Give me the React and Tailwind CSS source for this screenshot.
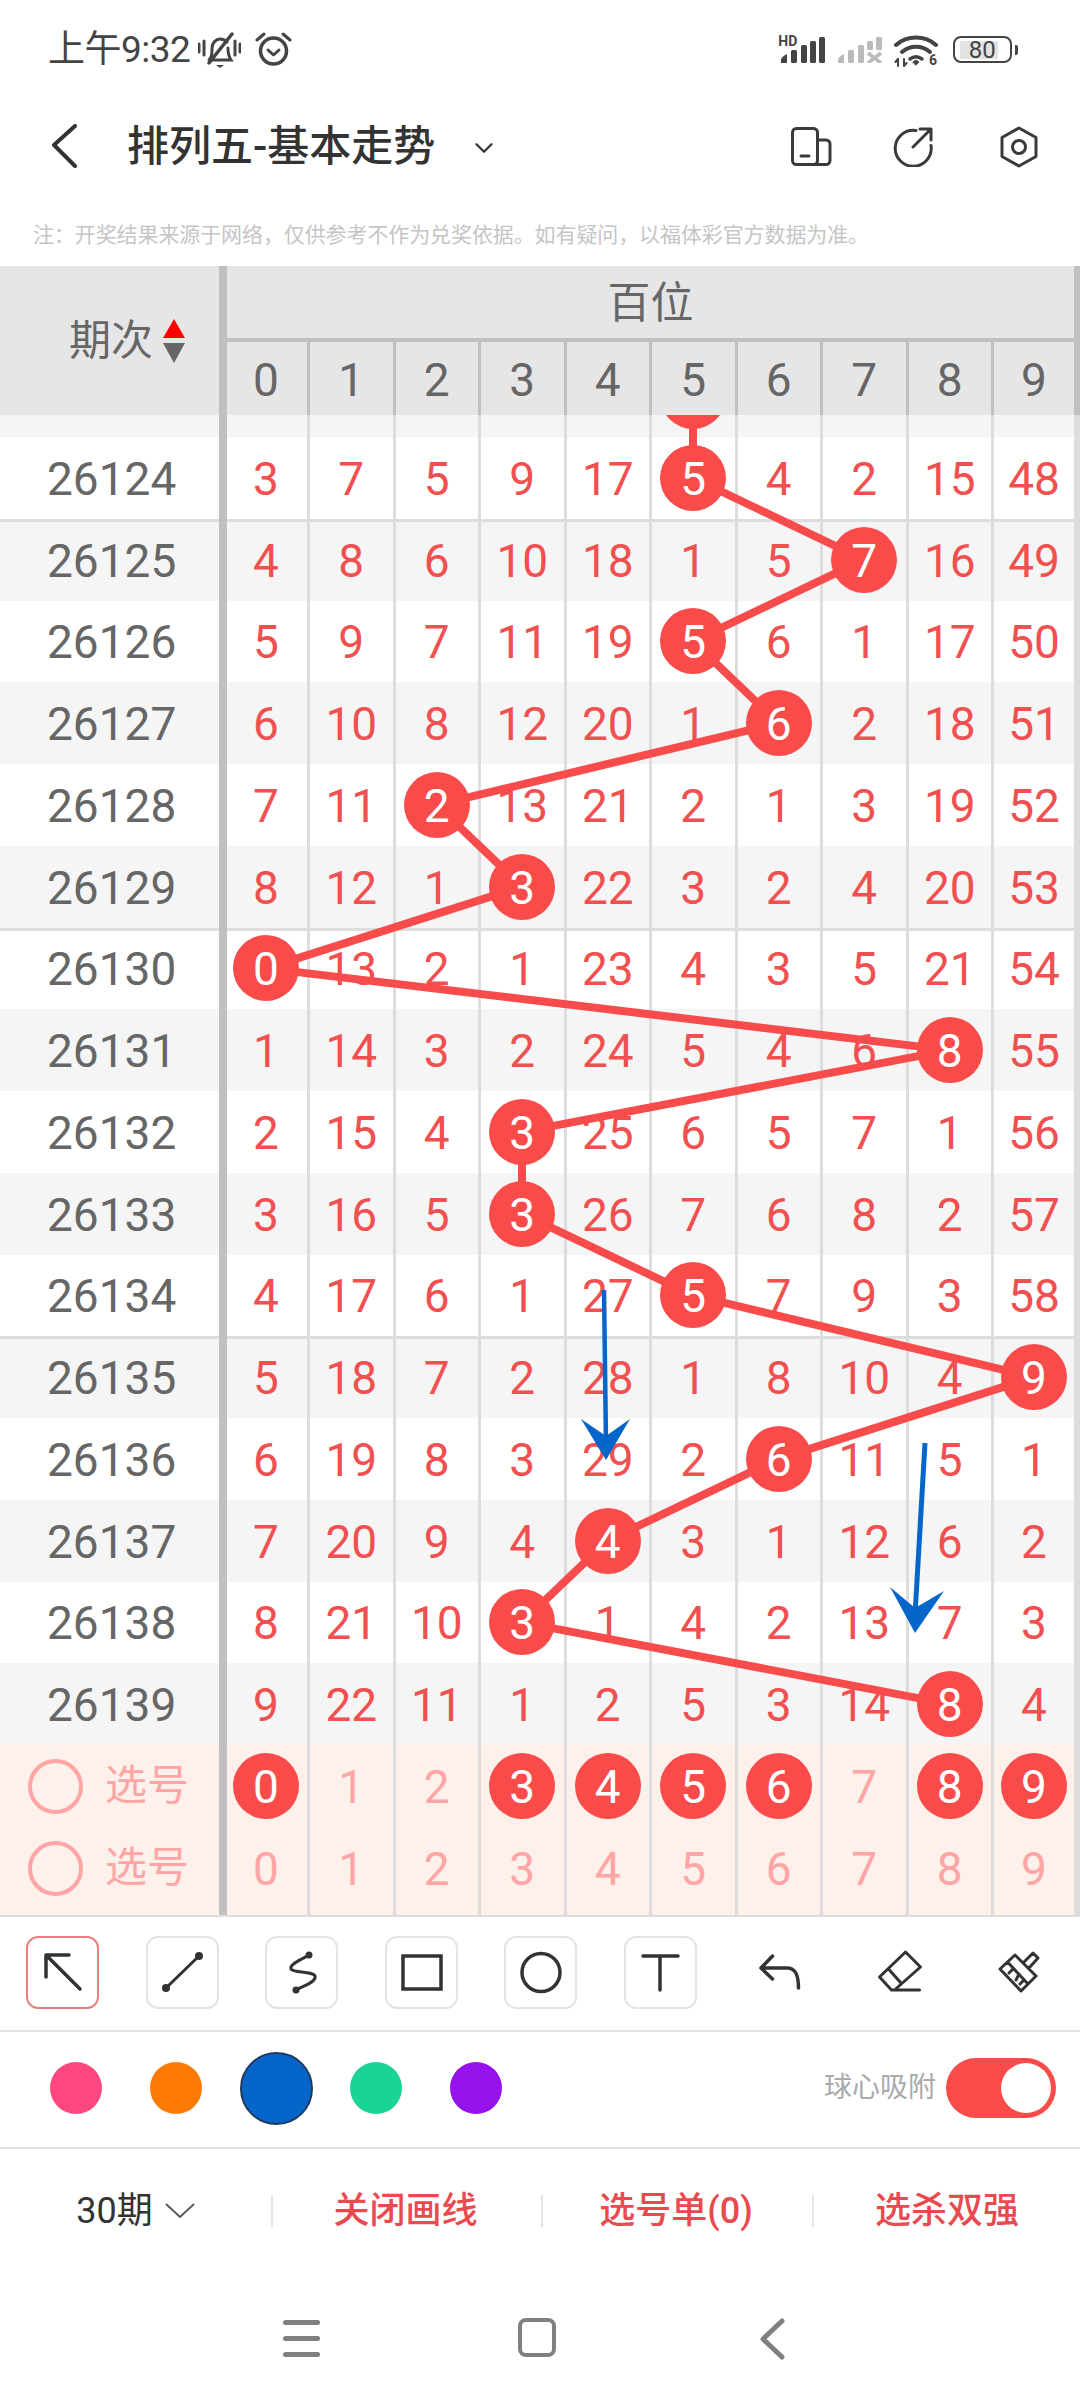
import { ChevronDown } from "lucide-react";

const rows = [
  ["26124", [3, 7, 5, 9, 17, 5, 4, 2, 15, 48], 5],
  ["26125", [4, 8, 6, 10, 18, 1, 5, 7, 16, 49], 7],
  ["26126", [5, 9, 7, 11, 19, 5, 6, 1, 17, 50], 5],
  ["26127", [6, 10, 8, 12, 20, 1, 6, 2, 18, 51], 6],
  ["26128", [7, 11, 2, 13, 21, 2, 1, 3, 19, 52], 2],
  ["26129", [8, 12, 1, 3, 22, 3, 2, 4, 20, 53], 3],
  ["26130", [0, 13, 2, 1, 23, 4, 3, 5, 21, 54], 0],
  ["26131", [1, 14, 3, 2, 24, 5, 4, 6, 8, 55], 8],
  ["26132", [2, 15, 4, 3, 25, 6, 5, 7, 1, 56], 3],
  ["26133", [3, 16, 5, 3, 26, 7, 6, 8, 2, 57], 3],
  ["26134", [4, 17, 6, 1, 27, 5, 7, 9, 3, 58], 5],
  ["26135", [5, 18, 7, 2, 28, 1, 8, 10, 4, 9], 9],
  ["26136", [6, 19, 8, 3, 29, 2, 6, 11, 5, 1], 6],
  ["26137", [7, 20, 9, 4, 4, 3, 1, 12, 6, 2], 4],
  ["26138", [8, 21, 10, 3, 1, 4, 2, 13, 7, 3], 3],
  ["26139", [9, 22, 11, 1, 2, 5, 3, 14, 8, 4], 8],
];

const digits = [0, 1, 2, 3, 4, 5, 6, 7, 8, 9];
const picked = [0, 3, 4, 5, 6, 8, 9];
const rowH = 81.75;
const colX = [266, 351, 436.5, 522, 607.5, 693, 778.5, 864, 949.5, 1034];
const rowGrid = "grid grid-cols-[227px_83px_repeat(8,85.5px)_1fr]";

// x of the ball in each period, first one is the half hidden row under the header
const path = [5, ...rows.map((r) => r[2])]
  .map((col, i) => `${colX[col]},${22 + rowH * (i - 0.5)}`)
  .join(" ");

function Num({ children }) {
  return <span className="mt-[2px]">{children}</span>;
}

function Ball({ n }) {
  return (
    <div className="relative z-[2] flex h-[66px] w-[66px] shrink-0 items-center justify-center rounded-full bg-[#fa4b4b] text-white">
      <Num>{n}</Num>
    </div>
  );
}

function cellBorder(i) {
  if (i === 9) return "border-r-[6px]";
  return "border-r-[3px]";
}

function Row({ no, values, ball, index }) {
  const gray = index % 2 !== 0;
  const line = index % 5 === 1;
  return (
    <div
      className={`${rowGrid} h-[81.75px] shrink-0 text-[46px] leading-none ${gray ? "bg-[#f5f5f5]" : "bg-white"} ${
        line ? "shadow-[inset_0_3px_0_#dddddd]" : ""
      }`}
    >
      <div className="flex items-center border-r-[8px] border-[#c0c0c0] pl-[47px] text-[#666666]">
        <Num>{no}</Num>
      </div>
      {values.map((v, i) => (
        <div
          key={i}
          className={`flex items-center justify-center border-[#dddddd] text-[#f05050] ${cellBorder(i)} ${i === 0 ? "pr-[2px]" : ""}`}
        >
          {i === ball ? <Ball n={v} /> : <Num>{v}</Num>}
        </div>
      ))}
    </div>
  );
}

function SelectRow({ balls, last }) {
  return (
    <div className={`${rowGrid} text-[46px] leading-none ${last ? "h-[88px]" : "h-[82px]"}`}>
      <div className={`flex items-center border-r-[8px] border-[#c0c0c0] pl-[28px] text-[#ffa5a5] ${last ? "pb-[6px]" : ""}`}>
        <div className="h-[55px] w-[55px] rounded-full border-[4px] border-[#ffa5a5]" />
        <span className="ml-[22px] text-[42px]">选号</span>
      </div>
      {digits.map((d) => (
        <div
          key={d}
          className={`flex items-center justify-center border-[#dddddd] text-[#ffa5a5] ${cellBorder(d)} ${d === 0 ? "pr-[2px]" : ""} ${last ? "pb-[6px]" : ""}`}
        >
          {balls.includes(d) ? <Ball n={d} /> : <Num>{d}</Num>}
        </div>
      ))}
    </div>
  );
}

function Tool({ active, children }) {
  return (
    <div
      className={`flex h-[73px] w-[73px] shrink-0 items-center justify-center rounded-[12px] border-2 ${
        active ? "border-[#e88080]" : "border-[#e4e4e4]"
      }`}
    >
      <svg width="73" height="73" viewBox="0 0 73 73" className="-m-[2px] shrink-0" fill="none" stroke="#333333" strokeWidth="3.5" strokeLinecap="round" strokeLinejoin="round">
        {children}
      </svg>
    </div>
  );
}

function PlainTool({ children }) {
  return (
    <svg width="73" height="73" viewBox="0 0 73 73" className="shrink-0" fill="none" stroke="#333333" strokeWidth="3.5" strokeLinecap="round" strokeLinejoin="round">
      {children}
    </svg>
  );
}

function Signal({ color, cross }) {
  return (
    <svg width="44" height="26" viewBox="0 0 44 26" fill={color}>
      <path d="M0 26v-3q0-3 6-6v9z" />
      <rect x="10" y="13" width="6" height="13" rx="1.5" />
      <rect x="20" y="8" width="6" height="18" rx="1.5" />
      {cross ? (
        <>
          <rect x="29" y="4" width="6" height="9" rx="1.5" />
          <rect x="38" y="0" width="6" height="13" rx="1.5" />
          <path d="M30 16l13 10M43 16l-13 10" stroke={color} strokeWidth="3.5" fill="none" />
        </>
      ) : (
        <>
          <rect x="29" y="4" width="6" height="22" rx="1.5" />
          <rect x="38" y="0" width="6" height="26" rx="1.5" />
        </>
      )}
    </svg>
  );
}

function StatusBar() {
  return (
    <div className="flex h-[95px] items-start pt-[32px] text-[#444444]">
      <span className="ml-[48px] mt-[1px] text-[37px] leading-[34px] tracking-[-0.5px]">上午9:32</span>
      <svg className="ml-[8px]" width="43" height="36" viewBox="0 0 43 36" fill="none" stroke="#444444" strokeWidth="3" strokeLinecap="round">
        <path d="M1 12v8M6 9v14M37 9v14M42 12v8" />
        <path d="M11 28c3-3 3-6 3-12 0-5 4-9 8-9 3 0 5 1 7 3M30 16c0 6 1 9 3 12H15" />
        <path d="M11 31L34 2" strokeWidth="3.5" />
        <path d="M18 33h8l-4 3z" fill="#444444" stroke="none" />
      </svg>
      <svg className="ml-[14px]" width="37" height="34" viewBox="0 0 37 34" fill="none" stroke="#444444" strokeWidth="3.5" strokeLinecap="round" strokeLinejoin="round">
        <circle cx="18.5" cy="19" r="13" />
        <path d="M13 18l5.500 5 5.500-5" strokeWidth="3" />
        <path d="M2 8l7-6M35 8l-7-6" strokeWidth="3" />
      </svg>
      <div className="relative ml-[489px] mt-[5px]">
        <span className="absolute -top-[2px] -left-[3px] text-[14px] font-bold leading-[12px] text-[#444444]">HD</span>
        <Signal color="#444444" />
      </div>
      <div className="ml-[13px] mt-[5px]">
        <Signal color="#bbbbbb" cross />
      </div>
      <svg className="ml-[12px] mt-[3px]" width="44" height="32" viewBox="0 0 44 32" fill="none" stroke="#444444" strokeLinecap="round">
        <path d="M2 10C13 0 31 0 42 10" strokeWidth="4" />
        <path d="M8 17c8-7 20-7 28 0" strokeWidth="4" />
        <path d="M16 24c4-3 8-3 12 0" strokeWidth="3.500" />
        <path d="M19 27l3-2 3 2-3 3z" fill="#444444" strokeWidth="1" />
        <path d="M4 24v7M1.500 27l2.500-3M10 24v7M12.500 28l-2.500 3" strokeWidth="2" />
        <text x="35" y="30" fontSize="14" fontWeight="700" fill="#444444" stroke="none">6</text>
      </svg>
      <div className="ml-[15px] mt-[4px] flex items-center">
        <div className="flex h-[27px] w-[59px] items-center rounded-[8px] border-[2.500px] border-[#444444] pl-[5px]">
          <div className="flex h-[18px] w-[38px] items-center justify-center bg-[#e3e3e3] pl-[6px] text-[24px] leading-none">80</div>
        </div>
        <div className="ml-[3px] h-[10px] w-[3px] rounded-r-[2px] bg-[#444444]" />
      </div>
    </div>
  );
}

function NavBar() {
  return (
    <div className="flex h-[104px] items-start text-[#333333]">
      <svg className="ml-[50px] mt-[29px]" width="28" height="44" viewBox="0 0 28 44" fill="none" stroke="#333333" strokeWidth="4" strokeLinecap="round" strokeLinejoin="round">
        <path d="M25 2L4 21l21 21" />
      </svg>
      <h1 className="ml-[49px] mt-[30px] text-[42px] font-medium leading-[44px]">排列五-基本走势</h1>
      <ChevronDown className="ml-[34px] mt-[38px]" size={30} strokeWidth={1.8} color="#333333" />
      <svg className="ml-[292px] mt-[32px]" width="42" height="40" viewBox="0 0 42 40" fill="none" stroke="#3a3a3a" strokeWidth="3" strokeLinecap="round" strokeLinejoin="round">
        <rect x="1.500" y="1.500" width="25" height="36" rx="4" />
        <path d="M26.500 13H35a4 4 0 0 1 4 4v16.500a4 4 0 0 1-4 4H22" />
        <path d="M10 29h8" />
      </svg>
      <svg className="ml-[60px] mt-[32px]" width="40" height="40" viewBox="0 0 40 40" fill="none" stroke="#3a3a3a" strokeWidth="3" strokeLinecap="round" strokeLinejoin="round">
        <path d="M23 3.500a18 18 0 1 0 15 15" />
        <path d="M20 20L38 2M27 2h11v11" />
      </svg>
      <svg className="ml-[66px] mt-[31px]" width="40" height="42" viewBox="0 0 40 42" fill="none" stroke="#3a3a3a" strokeWidth="3" strokeLinejoin="round">
        <path d="M20 2l17 9.500v19L20 40 3 30.500v-19z" />
        <circle cx="20" cy="21" r="6.500" />
      </svg>
    </div>
  );
}

function Header() {
  return (
    <div className="flex h-[149px] bg-[#e6e6e6] text-[#666666]">
      <div className="flex w-[227px] shrink-0 items-center border-r-[8px] border-[#c0c0c0] pl-[69px]">
        <span className="text-[42px] leading-none">期次</span>
        <div className="ml-[10px] flex flex-col gap-[5px]">
          <div className="h-0 w-0 border-x-[11px] border-b-[19px] border-x-transparent border-b-[#ff0000]" />
          <div className="h-0 w-0 border-x-[11px] border-t-[20px] border-x-transparent border-t-[#666666]" />
        </div>
      </div>
      <div className="flex min-w-0 flex-1 flex-col">
        <div className="flex h-[72px] items-center justify-center border-r-[6px] border-[#c0c0c0] pt-[3px] text-[43px] leading-none">百位</div>
        <div className="grid h-[77px] grid-cols-[83px_repeat(8,85.5px)_1fr] border-t-[4px] border-[#c0c0c0] text-[46px] leading-none">
          {digits.map((d) => (
            <div key={d} className={`flex items-center justify-center border-[#c0c0c0] ${cellBorder(d)} ${d === 0 ? "pr-[2px]" : ""}`}>
              <Num>{d}</Num>
            </div>
          ))}
        </div>
      </div>
    </div>
  );
}

function Body() {
  return (
    <div className="relative flex h-[1330px] flex-col overflow-hidden">
      <div className="-mt-[59.75px]">
        <Row no="" values={["", "", "", "", "", "", "", "", "", ""]} ball={5} index={-1} />
      </div>
      {rows.map((r, i) => (
        <Row key={r[0]} no={r[0]} values={r[1]} ball={r[2]} index={i} />
      ))}
      <svg className="absolute top-0 left-0 z-[1]" width="1080" height="1330" viewBox="0 0 1080 1330" fill="none">
        <polyline points={path} stroke="#f84b4b" strokeWidth="8" strokeLinejoin="round" />
        <path d="M604 875L606 1030" stroke="#0565c9" strokeWidth="4.500" />
        <path d="M606 1045L581 1004 606 1021 630 1004z" fill="#0565c9" />
        <path d="M925 1028L915 1200" stroke="#0565c9" strokeWidth="5" />
        <path d="M915 1218L890 1172 915 1193 944 1176z" fill="#0565c9" />
      </svg>
    </div>
  );
}

function Toolbar() {
  return (
    <div className="flex h-[115px] items-center gap-[46.5px] border-b-2 border-[#e2e2e2] pb-[2px] pl-[26px]">
      <Tool active>
        <path d="M54 53L20 19M20 41V19h23" />
      </Tool>
      <Tool>
        <path d="M20 52L53 20" strokeWidth="3" />
        <circle cx="20" cy="52" r="4" fill="#333333" stroke="none" />
        <circle cx="53" cy="20" r="4" fill="#333333" stroke="none" />
      </Tool>
      <Tool>
        <path d="M44 19C36 24 24 28 26 33c2 4 22 2 24 7 2 6-12 10-19 14" strokeWidth="3" />
        <circle cx="44" cy="19" r="3.500" fill="#333333" stroke="none" />
        <circle cx="31" cy="54" r="3.500" fill="#333333" stroke="none" />
      </Tool>
      <Tool>
        <rect x="18" y="20" width="38" height="33" strokeLinecap="butt" strokeLinejoin="miter" />
      </Tool>
      <Tool>
        <circle cx="37" cy="36.500" r="19" />
      </Tool>
      <Tool>
        <path d="M19 20h35M36 20v34" />
      </Tool>
      <PlainTool>
        <path d="M29.500 20L18 32l11.500 11M18 32h26c8 0 11.500 6 11.500 20" />
      </PlainTool>
      <PlainTool>
        <path d="M42.500 16l15 15-26 23h-3l-12-13zM25.500 33L38 47M28.500 54h28" strokeWidth="3" />
      </PlainTool>
      <PlainTool>
        <path d="M33 19L18 33l21 22 15-15zM41 27l10-10 5 5-9 10M25.500 26L46 48M31 33l-4 4M37 38l-3 6M42 44l-4 4" strokeWidth="3" />
      </PlainTool>
    </div>
  );
}

function ColorBar() {
  return (
    <div className="flex h-[117px] items-center border-b-2 border-[#e2e2e2] pb-[3px] pl-[26px]">
      <div className="flex w-[100px] justify-center"><div className="h-[52px] w-[52px] rounded-full bg-[#ff4880]" /></div>
      <div className="flex w-[100px] justify-center"><div className="h-[52px] w-[52px] rounded-full bg-[#ff7a05]" /></div>
      <div className="flex w-[100px] justify-center"><div className="h-[73px] w-[73px] rounded-full border-2 border-[#1f3a5f] bg-[#0565c9]" /></div>
      <div className="flex w-[100px] justify-center"><div className="h-[52px] w-[52px] rounded-full bg-[#19d496]" /></div>
      <div className="flex w-[100px] justify-center"><div className="h-[52px] w-[52px] rounded-full bg-[#9612ea]" /></div>
      <span className="ml-auto text-[28px] leading-none text-[#aaaaaa]">球心吸附</span>
      <div className="mr-[24px] ml-[10px] flex h-[60px] w-[110px] items-center justify-end rounded-full bg-[#fa4b4b] pr-[5px]">
        <div className="h-[50px] w-[50px] rounded-full bg-white" />
      </div>
    </div>
  );
}

function Actions() {
  return (
    <div className="grid h-[123px] grid-cols-[271px_270px_271px_1fr] items-center text-[36px] font-medium leading-[32px] text-[#e84a4f]">
      <div className="flex items-center justify-center text-[36px] font-normal text-[#333333]">
        30期
        <svg className="ml-[12px]" width="30" height="16" viewBox="0 0 30 16" fill="none" stroke="#555555" strokeWidth="1.800">
          <path d="M1 1l14 13L29 1" />
        </svg>
      </div>
      <div className="border-l-2 border-[#e5e5e5] pr-[3px] text-center">关闭画线</div>
      <div className="border-l-2 border-[#e5e5e5] pr-[3px] text-center">选号单(0)</div>
      <div className="border-l-2 border-[#e5e5e5] text-center">选杀双强</div>
    </div>
  );
}

function SystemNav() {
  return (
    <div className="flex items-start pt-[46px]">
      <div className="ml-[283px] flex w-[37px] flex-col gap-[11px] pt-[2px]">
        <div className="h-[5px] rounded-full bg-[#808080]" />
        <div className="h-[5px] rounded-full bg-[#808080]" />
        <div className="h-[5px] rounded-full bg-[#808080]" />
      </div>
      <div className="ml-[198px] h-[39px] w-[38px] rounded-[8px] border-[4px] border-[#808080]" />
      <svg className="ml-[202px]" width="28" height="42" viewBox="0 0 28 42" fill="none" stroke="#808080" strokeWidth="5" strokeLinecap="round" strokeLinejoin="round">
        <path d="M24 3L5 21l19 18" />
      </svg>
    </div>
  );
}

export default function App() {
  return (
    <div className="h-[2400px] w-[1080px] overflow-hidden bg-white font-['Roboto','Noto_Sans_CJK_SC',sans-serif]">
      <StatusBar />
      <NavBar />
      <div className="flex h-[67px] items-start pt-[24px] pl-[33px] text-[21px] leading-[24px] tracking-[-0.1px] text-[#c5c5c5]">
        注：开奖结果来源于网络，仅供参考不作为兑奖依据。如有疑问，以福体彩官方数据为准。
      </div>
      <Header />
      <Body />
      <div className="h-[172px] border-b-2 border-[#dddddd] bg-[#fef0ea]">
        <SelectRow balls={picked} />
        <SelectRow balls={[]} last />
      </div>
      <Toolbar />
      <ColorBar />
      <Actions />
      <SystemNav />
    </div>
  );
}
